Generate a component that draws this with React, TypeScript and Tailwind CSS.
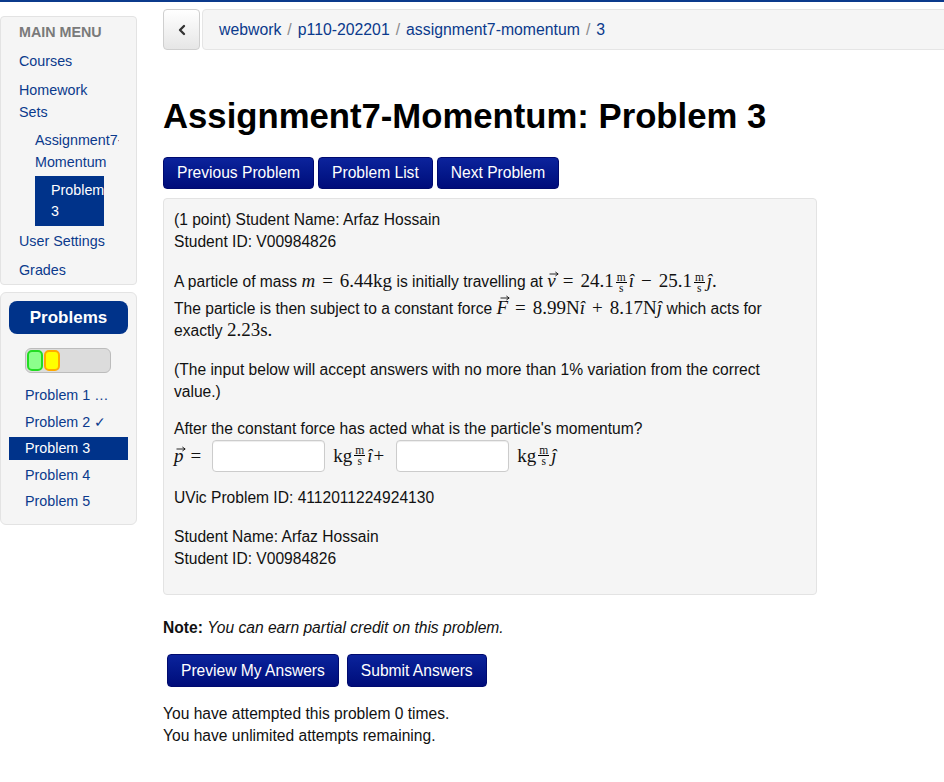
import { ChevronLeft } from 'lucide-react';

const serif = "font-['Liberation_Serif','Times_New_Roman',serif] text-[19px]";

function Vec({ ch, big = false }: { ch: string; big?: boolean }) {
    return (
        <span className="relative inline-block italic">
            {ch}
            <svg
                className={big ? 'absolute left-[4px] top-[-2px]' : 'absolute left-[2px] top-[1px]'}
                width="10"
                height="6"
                viewBox="0 0 10 6"
            >
                <path d="M0.5 3H9M6.4 1L9.2 3L6.4 5" stroke="currentColor" strokeWidth="0.9" fill="none" />
            </svg>
        </span>
    );
}

function Frac() {
    return (
        <span className="mx-[2px] inline-flex flex-col items-center align-[6px] text-[11.5px] leading-[9px]">
            <span className="px-[1px]">m</span>
            <span className="w-full border-t border-black text-center leading-[10px]">s</span>
        </span>
    );
}

function Op({ ch }: { ch: string }) {
    return <span className="mx-[7px]">{ch}</span>;
}

const menuItem = 'pl-[18px] py-[3.5px] leading-[22px]';

function Sidebar() {
    return (
        <aside className="mt-[14px] flex w-[137px] shrink-0 flex-col gap-[7px]">
            <div className="rounded-[4px] border border-[#e3e3e3] bg-[#f5f5f5] text-[14.3px] text-[#0b3a8c]">
                <div className={`${menuItem} font-bold text-[#7a7a7a]`}>MAIN MENU</div>
                <div className={menuItem}>Courses</div>
                <div className={menuItem}>
                    Homework
                    <br />
                    Sets
                </div>
                <div className="w-[118px] overflow-hidden whitespace-nowrap py-[3px] pl-[34px] leading-[22px]">
                    Assignment7-
                    <br />
                    Momentum
                </div>
                <div className="ml-[34px] w-[69px] overflow-hidden whitespace-nowrap bg-[#00338a] py-[4px] pl-[16px] leading-[21px] text-white">
                    Problem
                    <br />3
                </div>
                <div className={menuItem}>User Settings</div>
                <div className={menuItem}>Grades</div>
            </div>

            <div className="rounded-[6px] border border-[#e3e3e3] bg-[#f5f5f5] px-[8px] pb-[11px] pt-[8px] text-[14.3px] text-[#0b3a8c]">
                <div className="h-[33px] rounded-[8px] bg-[#00338a] text-center text-[17px] font-bold leading-[33px] text-white">
                    Problems
                </div>
                <div className="ml-[16px] mt-[14px] flex h-[25px] w-[86px] gap-[1px] rounded-[6px] border border-[#bcbcbc] bg-[#dcdcdc] p-[1px]">
                    <div className="w-[16px] rounded-[5px] border-2 border-[#22dd22] bg-[#8cff8c]" />
                    <div className="w-[16px] rounded-[5px] border-2 border-[#ffaa00] bg-[#ffff00]" />
                </div>
                <div className="mt-[11px] flex flex-col gap-[3.5px]">
                    <div className="pl-[16px] leading-[23px]">Problem 1 …</div>
                    <div className="pl-[16px] leading-[23px]">Problem 2 ✓</div>
                    <div className="bg-[#00338a] pl-[16px] leading-[23px] text-white">Problem 3</div>
                    <div className="pl-[16px] leading-[23px]">Problem 4</div>
                    <div className="pl-[16px] leading-[23px]">Problem 5</div>
                </div>
            </div>
        </aside>
    );
}

const btn =
    'h-[32px] rounded-[4px] border border-[#000a6e] bg-gradient-to-b from-[#0c239c] to-[#000c7a] px-[13px] text-[15.6px] text-white';

const inputCls =
    'h-[32px] w-[113px] rounded-[4px] border border-[#cccccc] bg-white shadow-[inset_0_1px_1px_rgba(0,0,0,0.075)]';

export default function App() {
    return (
        <div className="min-h-[782px] w-[944px] overflow-hidden bg-white font-['Liberation_Sans',Arial,sans-serif] text-[15.6px] text-[#111]">
            <div className="h-[2px] bg-[#0b3a8c]" />
            <div className="flex">
                <Sidebar />

                <main className="ml-[26px] min-w-0 flex-1 pt-[7px]">
                    <div className="-mr-[12px] flex h-[41px]">
                        <div className="flex w-[37px] items-center justify-center rounded-[4px] border border-[#cfcfcf] bg-gradient-to-b from-white to-[#e6e6e6] text-[#333]">
                            <ChevronLeft size={16} strokeWidth={3.5} />
                        </div>
                        <div className="ml-[2px] flex flex-1 items-center rounded-[4px] border border-[#e5e5e5] bg-[#f5f5f5] pl-[16px] text-[15.8px] text-[#0b3a8c]">
                            webwork <span className="mx-[6px] text-[#8a8a8a]">/</span> p110-202201{' '}
                            <span className="mx-[6px] text-[#8a8a8a]">/</span> assignment7-momentum{' '}
                            <span className="mx-[6px] text-[#8a8a8a]">/</span> 3
                        </div>
                    </div>

                    <h1 className="mt-[46px] text-[34.7px] font-bold leading-[40px] text-black">
                        Assignment7-Momentum: Problem 3
                    </h1>

                    <div className="mt-[21px] flex gap-[4px]">
                        <button className={btn}>Previous Problem</button>
                        <button className={btn}>Problem List</button>
                        <button className={btn}>Next Problem</button>
                    </div>

                    <div className="mt-[9px] w-[654px] rounded-[4px] border border-[#e3e3e3] bg-[#f5f5f5] px-[10px] pb-[24px] pt-[10px] leading-[22px]">
                        <div>(1 point) Student Name: Arfaz Hossain</div>
                        <div>Student ID: V00984826</div>

                        <div className="mt-[17px] flex flex-col gap-[5px]">
                            <div className="h-[22px] whitespace-nowrap">
                                A particle of mass <span className={`${serif} italic`}>m</span>
                                <span className={serif}>
                                    <Op ch="=" />
                                    6.44kg
                                </span>{' '}
                                is initially travelling at{' '}
                                <span className={serif}>
                                    <Vec ch="v" />
                                    <Op ch="=" />
                                    24.1
                                    <Frac />
                                    <i>î</i>
                                    <Op ch="−" />
                                    25.1
                                    <Frac />
                                    <i>ĵ</i>.
                                </span>
                            </div>
                            <div className="h-[22px] whitespace-nowrap">
                                The particle is then subject to a constant force{' '}
                                <span className={serif}>
                                    <Vec ch="F" big />
                                    <Op ch="=" />
                                    8.99N<i>î</i>
                                    <Op ch="+" />
                                    8.17N<i>ĵ</i>
                                </span>{' '}
                                which acts for
                            </div>
                        </div>
                        <div>
                            exactly <span className={serif}>2.23s.</span>
                        </div>

                        <p className="mt-[17px]">
                            (The input below will accept answers with no more than 1% variation from the correct
                            <br />
                            value.)
                        </p>

                        <p className="mt-[15px]">After the constant force has acted what is the particle's momentum?</p>
                        <div className={`${serif} flex h-[32px] items-center`}>
                            <Vec ch="p" />
                            <span className="ml-[7px]">=</span>
                            <input className={`ml-[11px] ${inputCls}`} />
                            <span className="ml-[8px]">kg</span>
                            <Frac />
                            <i>î</i>
                            <span className="ml-[1px]">+</span>
                            <input className={`ml-[12px] ${inputCls}`} />
                            <span className="ml-[8px]">kg</span>
                            <Frac />
                            <i>ĵ</i>
                        </div>

                        <p className="mt-[15px]">UVic Problem ID: 4112011224924130</p>

                        <p className="mt-[17px]">Student Name: Arfaz Hossain</p>
                        <p>Student ID: V00984826</p>
                    </div>

                    <p className="mt-[22px] leading-[22px]">
                        <b>Note:</b> <i>You can earn partial credit on this problem.</i>
                    </p>

                    <div className="ml-[4px] mt-[15px] flex gap-[8px]">
                        <button className={`${btn} h-[33px]`}>Preview My Answers</button>
                        <button className={`${btn} h-[33px]`}>Submit Answers</button>
                    </div>

                    <p className="mt-[16px] leading-[22px]">
                        You have attempted this problem 0 times.
                        <br />
                        You have unlimited attempts remaining.
                    </p>
                </main>
            </div>
        </div>
    );
}
